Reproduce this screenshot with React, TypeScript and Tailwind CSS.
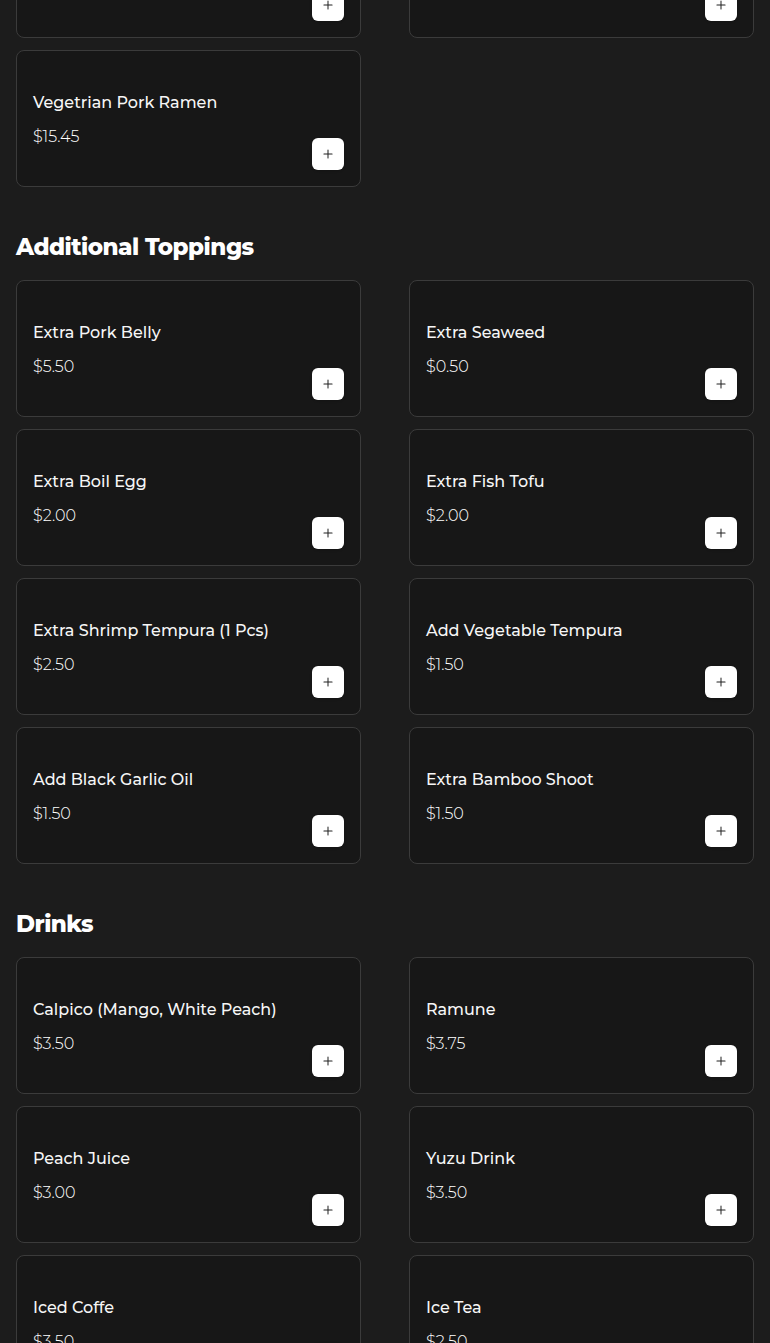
import React from 'react';
import { Plus } from 'lucide-react';

type Item = { name: string; price: string };

const sections: { title?: string; items: Item[] }[] = [
  {
    items: [
      { name: 'Tonkotsu Ramen', price: '$16.95' },
      { name: 'Spicy Miso Ramen', price: '$16.45' },
      { name: 'Vegetrian Pork Ramen', price: '$15.45' },
    ],
  },
  {
    title: 'Additional Toppings',
    items: [
      { name: 'Extra Pork Belly', price: '$5.50' },
      { name: 'Extra Seaweed', price: '$0.50' },
      { name: 'Extra Boil Egg', price: '$2.00' },
      { name: 'Extra Fish Tofu', price: '$2.00' },
      { name: 'Extra Shrimp Tempura (1 Pcs)', price: '$2.50' },
      { name: 'Add Vegetable Tempura', price: '$1.50' },
      { name: 'Add Black Garlic Oil', price: '$1.50' },
      { name: 'Extra Bamboo Shoot', price: '$1.50' },
    ],
  },
  {
    title: 'Drinks',
    items: [
      { name: 'Calpico (Mango, White Peach)', price: '$3.50' },
      { name: 'Ramune', price: '$3.75' },
      { name: 'Peach Juice', price: '$3.00' },
      { name: 'Yuzu Drink', price: '$3.50' },
      { name: 'Iced Coffe', price: '$3.50' },
      { name: 'Ice Tea', price: '$2.50' },
    ],
  },
];

const MenuCard: React.FC<{ item: Item }> = ({ item }) => (
  <div className="flex h-[137px] justify-between rounded-lg border border-[#3b3b3b] bg-[#171717] p-4">
    <div className="pt-6">
      <div className="text-base leading-6 font-medium text-[#f6f6f6]">{item.name}</div>
      <div className="mt-[10px] text-base leading-6 font-light text-white">{item.price}</div>
    </div>
    <button className="flex h-8 w-8 shrink-0 items-center justify-center self-end rounded-md bg-white text-[#222] shadow-sm">
      <Plus size={14} strokeWidth={1.75} />
    </button>
  </div>
);

export default function App() {
  return (
    <div
      className="min-h-screen overflow-hidden bg-[#1c1c1c] px-4 pb-10"
      style={{ fontFamily: 'Montserrat, "Open Sans", sans-serif' }}
    >
      <div className="-mt-[99px]">
        {sections.map((section, i) => (
          <div key={i}>
            {section.title && (
              <h2 className="mt-11 mb-[17px] text-[23px] leading-8 font-extrabold tracking-[-0.5px] text-white">
                {section.title}
              </h2>
            )}
            <div className="grid grid-cols-2 gap-x-12 gap-y-3">
              {section.items.map((item) => (
                <MenuCard key={item.name} item={item} />
              ))}
            </div>
          </div>
        ))}
      </div>
    </div>
  );
}
